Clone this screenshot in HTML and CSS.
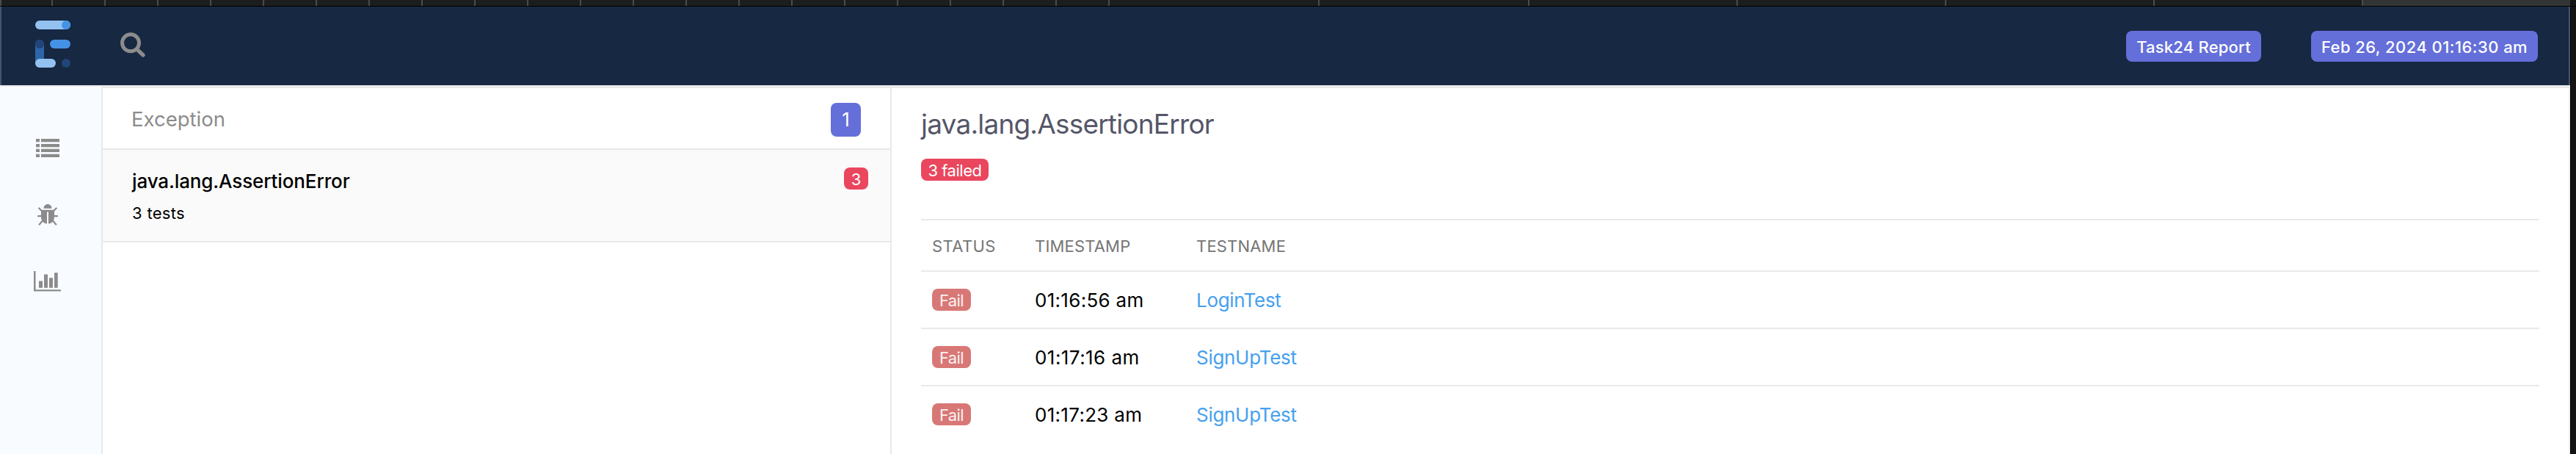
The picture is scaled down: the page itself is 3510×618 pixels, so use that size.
FILE: index.html
```
<!DOCTYPE html>
<html lang="en">
<head>
<meta charset="utf-8">
<title>Task24 Report</title>
<link rel="stylesheet" href="styles.css">
</head>
<body>
<div class="tabs">
  <i class="tab edge"></i>
  <i class="tab pin"></i><i class="tab pin"></i><i class="tab pin"></i><i class="tab pin"></i><i class="tab pin"></i>
  <i class="tab pin"></i><i class="tab pin"></i><i class="tab pin"></i><i class="tab pin"></i><i class="tab pin"></i>
  <i class="tab pin"></i><i class="tab pin"></i><i class="tab pin"></i><i class="tab pin"></i><i class="tab pin"></i>
  <i class="tab pin"></i><i class="tab pin"></i><i class="tab pin"></i><i class="tab pin"></i><i class="tab pin"></i>
  <i class="tab wide"></i><i class="tab wide"></i><i class="tab"></i><i class="tab"></i><i class="tab"></i><i class="tab"></i>
  <i class="active"></i>
</div>
<div class="window">
  <div class="app">
    <header class="header">
      <svg class="logo" width="48" height="64" viewBox="0 0 48 64">
        <rect width="48" height="12" rx="6" fill="#93c2f1"/>
        <circle cx="42" cy="6" r="6" fill="#4492e6"/>
        <rect y="26" width="12" height="38" rx="6" fill="#2d65a8"/>
        <circle cx="6" cy="32" r="6" fill="#214578"/>
        <rect x="20" y="26" width="28" height="12" rx="6" fill="#4492e6"/>
        <rect y="52" width="28" height="12" rx="6" fill="#93c2f1"/>
        <circle cx="42" cy="58" r="6" fill="#214578"/>
      </svg>
      <svg class="search" width="34" height="34" viewBox="0 0 34 34" fill="none" stroke="#8c8c8c">
        <circle cx="14" cy="14.3" r="11.5" stroke-width="5"/>
        <path d="M23 23.500L31 31" stroke-width="5.200" stroke-linecap="round"/>
      </svg>
      <span class="pill report">Task24 Report</span>
      <span class="pill date">Feb 26, 2024 01:16:30 am</span>
    </header>
    <div class="body">
      <nav class="sidebar">
        <span class="navitem"><svg width="32" height="26" viewBox="0 0 32 26" fill="#8b8b8b">
          <path d="M0 0h5v4.300H0zM7 0h25v4.300H7zM0 6.900h5v4.300H0zM7 6.900h25v4.300H7zM0 13.800h5v4.300H0zM7 13.800h25v4.300H7zM0 20.700h5V25H0zM7 20.700h25V25H7z"/>
        </svg></span>
        <span class="navitem"><svg width="28" height="29" viewBox="0 0 28 29">
          <path d="M8.500 5.800C8.500 2.400 10.900 0 14 0s5.500 2.400 5.500 5.800z" fill="#8b8b8b"/>
          <path d="M5 7.700h18v9.800c0 5-3.500 8.800-8 9V10.500h-2v16c-4.500-.2-8-4-8-9z" fill="#8b8b8b"/>
          <path d="M6 9.300L2.300 5.500M22 9.300l3.700-3.800M6 16.200H1M22 16.200h5M7 22.500l-4.300 5M21 22.500l4.300 5" fill="none" stroke="#8b8b8b" stroke-width="2.200" stroke-linecap="round"/>
        </svg></span>
        <span class="navitem chart"><svg width="37" height="28" viewBox="0 0 37 28" fill="#8b8b8b">
          <path d="M0 0h2.500v25.200H37v2.400H0zM7 13.500h5v9.300H7zM14 4.600h5v18.200h-5zM21 9.200h5v13.600h-5zM28 2.200h4.700v20.600H28z"/>
        </svg></span>
      </nav>
      <section class="list">
        <div class="listhead"><span class="listtitle">Exception</span><span class="total">1</span></div>
        <div class="item">
          <div>
            <div class="name">java.lang.AssertionError</div>
            <div class="sub">3 tests</div>
          </div>
          <span class="badge count">3</span>
        </div>
      </section>
      <main class="detail">
        <h1 class="title">java.lang.AssertionError</h1>
        <span class="badge failed">3 failed</span>
        <div class="table">
          <div class="row head"><span class="h1c">STATUS</span><span class="h2c">TIMESTAMP</span><span class="h2c">TESTNAME</span></div>
          <div class="row"><span><b class="badge fail">Fail</b></span><span class="time">01:16:56 am</span><a class="link">LoginTest</a></div>
          <div class="row"><span><b class="badge fail">Fail</b></span><span class="time t2">01:17:16 am</span><a class="link">SignUpTest</a></div>
          <div class="row"><span><b class="badge fail">Fail</b></span><span class="time">01:17:23 am</span><a class="link">SignUpTest</a></div>
        </div>
      </main>
    </div>
  </div>
  <div class="backdrop"></div>
</div>
</body>
</html>
```
FILE: styles.css
```
* { box-sizing: border-box; }
body {
  margin: 0;
  width: 3510px;
  height: 618px;
  overflow: hidden;
  display: flex;
  flex-direction: column;
  font-family: Inter, "Open Sans", sans-serif;
  background: #fff;
  color: #000;
}

/* browser tab strip */
.tabs {
  display: flex;
  height: 9px;
  flex: none;
  background: #1c1e1d;
  border-bottom: 1px solid #000;
}
.tab { width: 284px; border-right: 2px solid #4a4c4b; }
.tab.edge { width: 72px; border-left: 2px solid #4a4c4b; }
.tab.pin { width: 72px; }
.tab.wide { width: 286px; }
.active { flex: 1; background: #333534; border-right: 8px solid #141414; }

.window { display: flex; flex: 1; min-height: 0; }
.backdrop { width: 8px; background: #141414; border-left: 1px solid #000; }
.app { flex: 1; display: flex; flex-direction: column; }

.header {
  height: 107px;
  display: flex;
  align-items: flex-start;
  background: #172842;
  border-left: 2px solid #465569;
  border-right: 2px solid #465569;
  padding: 19px 42px 0 46px;
}
.search { margin: 16px 0 0 68px; }
.pill {
  margin-top: 14px;
  height: 42px;
  line-height: 44px;
  border-radius: 8px;
  background: #656fd9;
  color: #fff;
  font-size: 22px;
  font-weight: 500;
  text-align: center;
}
.report { width: 184px; margin-left: auto; letter-spacing: .2px; }
.date { width: 309px; margin-left: 68px; letter-spacing: .45px; }

.body { flex: 1; display: flex; min-height: 0; }
.sidebar {
  width: 140px;
  border-top: 2px solid #e9e9ea;
  border-right: 2px solid #e9e9ea;
  background: #f8fbff;
  padding: 39px 8px 0 0;
}
.navitem { display: flex; align-items: center; justify-content: center; height: 90px; }
.navitem svg { margin-right: 1px; }
.chart { padding-top: 2px; }

.list {
  width: 1075px;
  border-top: 4px solid #e9e9ea;
  border-right: 2px solid #e9e9ea;
}
.listhead {
  height: 84px;
  border-bottom: 2px solid #e9e9ea;
  padding: 0 40px 0 39px;
  display: flex;
  align-items: center;
  justify-content: space-between;
}
.listtitle { font-size: 27.5px; line-height: 32px; color: #8c8c8c; padding-top: 2px; }
.total {
  width: 41px;
  height: 46px;
  margin-top: 3px;
  line-height: 45px;
  border-radius: 8px;
  background: #656fd9;
  color: #fff;
  font-size: 26px;
  text-align: center;
}
.item {
  height: 126px;
  padding: 24px 30px 0 40px;
  display: flex;
  align-items: flex-start;
  justify-content: space-between;
  background: #fafafa;
  border-bottom: 2px solid #e9e9ea;
}
.name { font-size: 26px; font-weight: 500; line-height: 32px; letter-spacing: -.12px; padding-top: 3px; }
.sub { font-size: 22px; line-height: 26px; margin-top: 14px; letter-spacing: .3px; }

.badge {
  display: block;
  height: 30px;
  line-height: 32px;
  border-radius: 8px;
  background: #ea465e;
  color: #fff;
  font-size: 22px;
  font-weight: 400;
  text-align: center;
}
.count { width: 33px; }
.failed { width: 92px; letter-spacing: -.5px; }
.fail { width: 53px; background: #d87876; color: #fbf1f1; letter-spacing: -.6px; }

.detail {
  flex: 1;
  border-top: 4px solid #e9e9ea;
  border-right: 2px solid #f0f0f0;
  padding: 27px 40px 0 40px;
}
.title {
  margin: 0 0 25px;
  font-size: 37px;
  line-height: 44px;
  font-weight: 400;
  letter-spacing: -.8px;
  color: #555668;
}
.table { margin-top: 52px; }
.row {
  display: grid;
  grid-template-columns: 140px 220px 1fr;
  align-items: center;
  height: 78px;
  padding-left: 15px;
  border-top: 2px solid #e9e9ea;
}
.row.head { height: 70px; padding-top: 2px; font-size: 22px; color: #757575; }
.h1c { letter-spacing: .4px; }
.h2c { letter-spacing: .18px; }
.time { font-size: 26px; letter-spacing: .3px; }
.t2 { letter-spacing: .45px; }
.link { font-size: 26px; letter-spacing: -.3px; color: #46a0ef; }
```
